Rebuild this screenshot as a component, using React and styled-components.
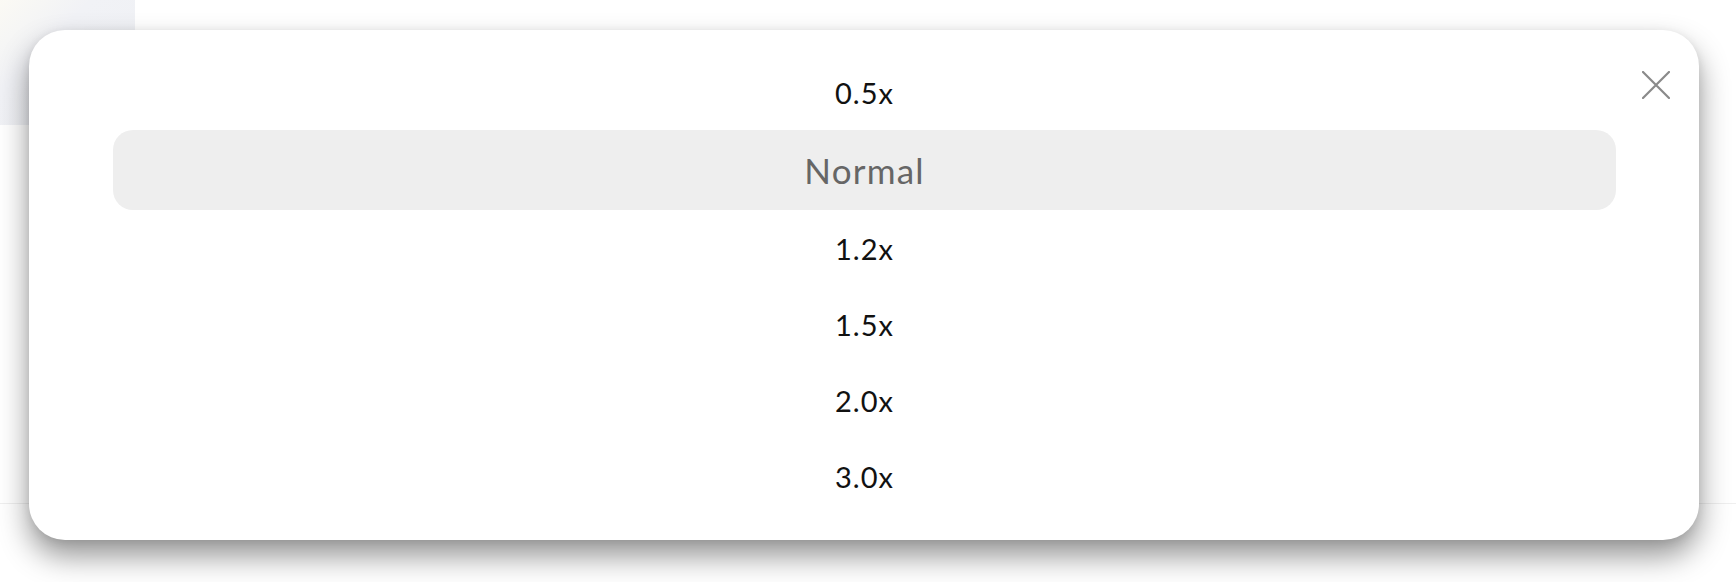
import React from 'react';
import styled, { createGlobalStyle } from 'styled-components';

const GlobalStyle = createGlobalStyle`
  html, body {
    margin: 0;
    padding: 0;
    background: #fff;
  }
  body {
    font-family: 'Lato', 'Noto Sans', sans-serif;
    overflow: hidden;
  }
`;

const Page = styled.div`
  position: relative;
  width: 1736px;
  height: 582px;
  overflow: hidden;
  background: #fff;
`;

const BackdropTile = styled.div`
  width: 135px;
  height: 125px;
  background: linear-gradient(135deg, #fbfaf4 0%, #f1f2f6 35%, #eef0f4 100%);
`;

const BackdropRule = styled.div`
  margin-top: 378px;
  height: 1px;
  background: #efefef;
`;

const Sheet = styled.div`
  position: absolute;
  left: 29px;
  top: 30px;
  width: 1670px;
  height: 510px;
  box-sizing: border-box;
  padding: 24px 83px 0 84px;
  background: #fff;
  border-radius: 36px;
  box-shadow: 0 16px 30px rgba(0, 0, 0, 0.42), 0 2px 10px rgba(0, 0, 0, 0.08);
`;

const CloseButton = styled.button`
  position: absolute;
  top: 41px;
  right: 29px;
  width: 28px;
  height: 28px;
  padding: 0;
  border: 0;
  background: none;
  cursor: pointer;
  display: flex;
`;

const SpeedList = styled.ul`
  list-style: none;
  margin: 0;
  padding: 0;
  display: flex;
  flex-direction: column;
`;

const SpeedItem = styled.li`
  height: ${(p) => (p.active ? '80px' : '76px')};
  display: flex;
  align-items: center;
  justify-content: center;
  border-radius: 20px;
  background: ${(p) => (p.active ? '#eeeeee' : 'transparent')};
  color: ${(p) => (p.active ? '#666' : '#111')};
  font-size: ${(p) => (p.active ? '35px' : '29px')};
  font-weight: 400;
  letter-spacing: ${(p) => (p.active ? '1.2px' : '1px')};
  cursor: pointer;
`;

const speeds = ['0.5x', 'Normal', '1.2x', '1.5x', '2.0x', '3.0x'];

export default function App() {
  return (
    <Page>
      <GlobalStyle />
      <BackdropTile />
      <BackdropRule />
      <Sheet>
        <CloseButton aria-label="Close">
          <svg width="28" height="28" viewBox="0 0 28 28">
            <path
              d="M1 1 L27 27 M27 1 L1 27"
              stroke="#8a8a8a"
              strokeWidth="2.2"
              strokeLinecap="round"
            />
          </svg>
        </CloseButton>
        <SpeedList>
          {speeds.map((s) => (
            <SpeedItem key={s} active={s === 'Normal'}>
              {s}
            </SpeedItem>
          ))}
        </SpeedList>
      </Sheet>
    </Page>
  );
}
